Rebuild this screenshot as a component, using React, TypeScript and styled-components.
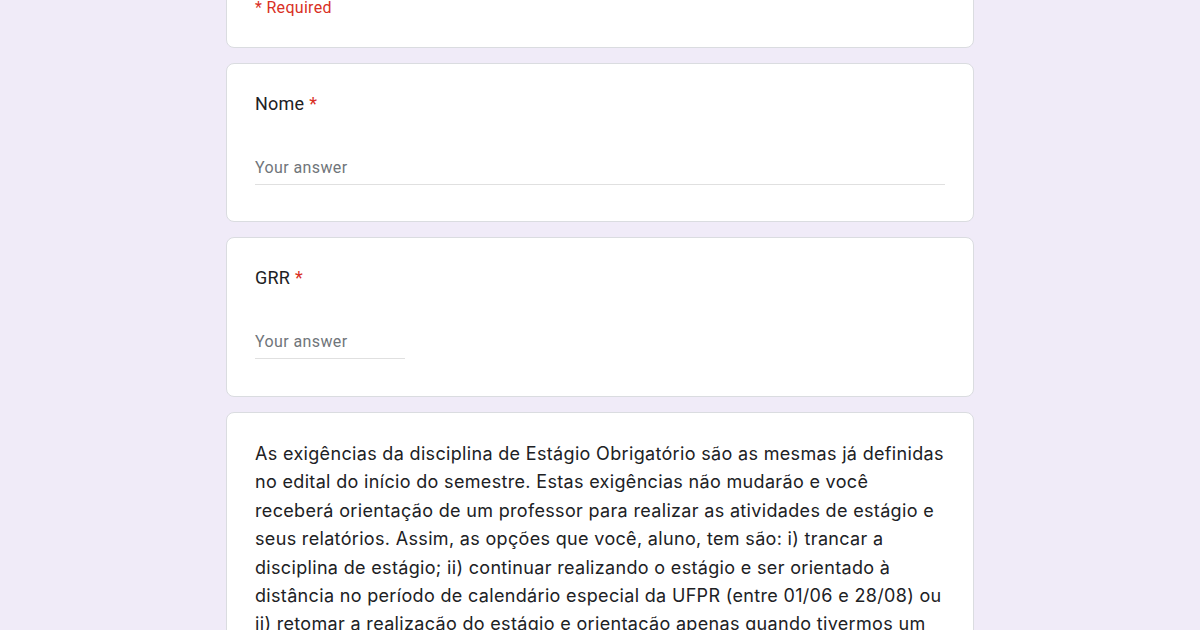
import React from "react";
import styled, { createGlobalStyle } from "styled-components";

const GlobalStyle = createGlobalStyle`
  html, body {
    margin: 0;
    padding: 0;
    background: #f0ebf8;
    overflow: hidden;
  }
  body {
    font-family: Roboto, "Noto Sans", Arial, sans-serif;
    color: #202124;
  }
`;

const Page = styled.div`
  width: 100%;
  height: 630px;
  overflow: hidden;
  background: #f0ebf8;
`;

const Column = styled.main`
  width: 748px;
  margin: -28px auto 0;
  display: flex;
  flex-direction: column;
  gap: 15px;
`;

const Card = styled.section<{ $pt?: number; $pb?: number }>`
  background: #ffffff;
  border: 1px solid #dadce0;
  border-radius: 8px;
  padding: ${(p) => p.$pt ?? 24}px 28px ${(p) => p.$pb ?? 24}px 28px;
  box-sizing: border-box;
`;

const RequiredNote = styled.div`
  font-size: 16px;
  line-height: 22px;
  color: #d93025;
  letter-spacing: 0.3px;
`;

const QuestionTitle = styled.div`
  font-size: 18px;
  line-height: 24px;
  color: #202124;
  letter-spacing: 0.2px;
`;

const Star = styled.span`
  color: #d93025;
  margin-left: 5px;
`;

const AnswerField = styled.div<{ $width: string }>`
  margin-top: 40px;
  width: ${(p) => p.$width};
  border-bottom: 1px solid #e0e0e0;
  padding-bottom: 4px;
  font-size: 16px;
  line-height: 24px;
  color: #70757a;
  letter-spacing: 0.4px;
`;

const Paragraph = styled.p`
  margin: 0;
  font-family: Inter, Roboto, sans-serif;
  font-size: 18px;
  line-height: 28.4px;
  color: #202124;
  white-space: nowrap;
  letter-spacing: 0.33px;
`;

const lines = [
  "As exigências da disciplina de Estágio Obrigatório são as mesmas já definidas",
  "no edital do início do semestre. Estas exigências não mudarão e você",
  "receberá orientação de um professor para realizar as atividades de estágio e",
  "seus relatórios. Assim, as opções que você, aluno, tem são: i) trancar a",
  "disciplina de estágio; ii) continuar realizando o estágio e ser orientado à",
  "distância no período de calendário especial da UFPR (entre 01/06 e 28/08) ou",
  "ii) retomar a realização do estágio e orientação apenas quando tivermos um",
  "retorno das atividades presenciais.",
];

export default function App() {
  return (
    <Page>
      <GlobalStyle />
      <Column>
        <Card $pt={24} $pb={28}>
          <RequiredNote>* Required</RequiredNote>
        </Card>
        <Card $pt={28} $pb={36}>
          <QuestionTitle>
            Nome<Star>*</Star>
          </QuestionTitle>
          <AnswerField $width="100%">Your answer</AnswerField>
        </Card>
        <Card $pt={28} $pb={37}>
          <QuestionTitle>
            GRR<Star>*</Star>
          </QuestionTitle>
          <AnswerField $width="150px">Your answer</AnswerField>
        </Card>
        <Card $pt={27} $pb={24}>
          <Paragraph>
            {lines.map((l, i) => (
              <React.Fragment key={i}>
                {l}
                {i < lines.length - 1 && <br />}
              </React.Fragment>
            ))}
          </Paragraph>
        </Card>
      </Column>
    </Page>
  );
}
